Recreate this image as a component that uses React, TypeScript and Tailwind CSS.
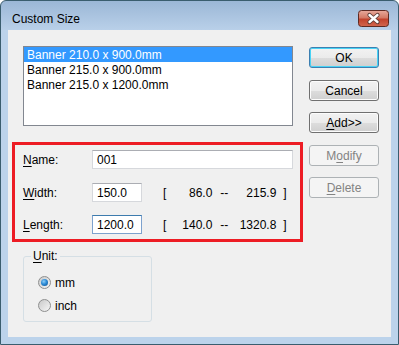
import type { ReactNode } from 'react';

type BtnKind = 'default' | 'normal' | 'disabled';

const Btn = ({ kind, children }: { kind: BtnKind; children: ReactNode }) => {
  if (kind === 'default') {
    return (
      <div className="flex h-[21px] w-[70px] items-center justify-center rounded-[3px] border border-[#3c7fb1] bg-[linear-gradient(to_bottom,#f2f2f2_0%,#ebebeb_50%,#dddddd_51%,#cfcfcf_100%)] shadow-[inset_0_0_0_1px_#48d3f5] text-black">
        {children}
      </div>
    );
  }
  if (kind === 'disabled') {
    return (
      <div className="flex h-[21px] w-[70px] items-center justify-center rounded-[3px] border border-[#adb2b5] bg-[#f4f4f4] text-[#838383]">
        {children}
      </div>
    );
  }
  return (
    <div className="flex h-[21px] w-[70px] items-center justify-center rounded-[3px] border border-[#707070] bg-[linear-gradient(to_bottom,#f2f2f2_0%,#ebebeb_50%,#dddddd_51%,#cfcfcf_100%)] shadow-[inset_0_0_0_1px_#fcfcfc] text-black">
      {children}
    </div>
  );
};

const Radio = ({ checked }: { checked: boolean }) => (
  <div className="flex h-[13px] w-[13px] items-center justify-center rounded-full border border-[#8e8f8f] bg-[linear-gradient(to_bottom_right,#c9c9c9,#f6f6f6)]">
    {checked && (
      <div className="h-[7px] w-[7px] rounded-full bg-[radial-gradient(circle_at_40%_35%,#8fd0f7_0%,#2c8ad6_45%,#0d4f8b_100%)]" />
    )}
  </div>
);

const CloseBtn = () => (
  <svg width="31" height="17" viewBox="0 0 31 17" className="mt-[9px]">
    <defs>
      <linearGradient id="cg" x1="0" y1="0" x2="0" y2="1">
        <stop offset="0" stopColor="#e8aa9c" />
        <stop offset="0.45" stopColor="#d47a66" />
        <stop offset="0.55" stopColor="#c2432d" />
        <stop offset="1" stopColor="#d2674f" />
      </linearGradient>
    </defs>
    <rect x="0.5" y="0.5" width="30" height="16" rx="3" fill="url(#cg)" stroke="#5e2a22" />
    <path d="M11.5 5 L19.5 12 M19.5 5 L11.5 12" stroke="#5b3b36" strokeWidth="4.2" strokeLinecap="round" />
    <path d="M11.5 5 L19.5 12 M19.5 5 L11.5 12" stroke="#ffffff" strokeWidth="2.4" strokeLinecap="round" />
  </svg>
);

const Field = ({ label, value, focused }: { label: ReactNode; value: string; focused?: boolean }) => (
  <>
    <div className="w-[69px]">{label}</div>
    <div
      className={
        focused
          ? 'flex h-[19px] w-[50px] items-center border border-[#7da2ce] border-t-[#3d7bad] bg-white pl-[4px]'
          : 'flex h-[19px] w-[50px] items-center border border-[#d6d8dc] border-t-[#abadb3] bg-white pl-[4px]'
      }
    >
      {value}
    </div>
  </>
);

const Range = ({ min, max }: { min: string; max: string }) => (
  <div className="flex items-center">
    <span className="ml-[21px]">[</span>
    <span className="w-[46px] text-right">{min}</span>
    <span className="ml-[8px]">--</span>
    <span className="w-[48px] text-right">{max}</span>
    <span className="ml-[7px]">]</span>
  </div>
);

export default function App() {
  const sizes = ['Banner 210.0 x 900.0mm', 'Banner 215.0 x 900.0mm', 'Banner 215.0 x 1200.0mm'];

  return (
    <div className="h-[345px] w-[399px] bg-white font-['Liberation_Sans',Arial,sans-serif] text-[12px] leading-none text-black">
      <div className="flex h-full w-full flex-col rounded-t-[6px] border border-[#3a5d6e] bg-[linear-gradient(to_bottom,#9bb7d6_0px,#b9d0e9_29px,#bcd3eb_29px)]">
        {/* title bar */}
        <div className="flex h-[29px] items-start justify-between pl-[11px] pr-[9px]">
          <span className="pt-[12px]">Custom Size</span>
          <CloseBtn />
        </div>

        {/* client area */}
        <div className="mx-[7px] mb-[7px] flex flex-1 bg-[#f0f0f0] pl-[4px]">
          <div className="flex w-[291px] flex-col">
            <div className="ml-[11px] mt-[16px] h-[80px] w-[270px] border border-[#828790] bg-white">
              {sizes.map((s, i) => (
                <div
                  key={s}
                  className={i === 0 ? 'flex h-[15px] items-center bg-[#3399ff] pl-[3px] text-white' : 'flex h-[15px] items-center pl-[3px]'}
                >
                  {s}
                </div>
              ))}
            </div>

            <div className="mt-[16px] flex h-[100px] flex-col border-[3px] border-[#ed1c24] pb-[5px] pl-[8px] pr-[7px] pt-[5px]">
              <div className="flex h-[19px] items-center">
                <div className="w-[69px]">
                  <span className="underline underline-offset-[2px]">N</span>ame:
                </div>
                <div className="flex h-[19px] flex-1 items-center border border-[#d6d8dc] border-t-[#abadb3] bg-white pl-[4px]">001</div>
              </div>
              <div className="mt-[14px] flex h-[19px] items-center">
                <Field
                  label={
                    <>
                      <span className="underline underline-offset-[2px]">W</span>idth:
                    </>
                  }
                  value="150.0"
                />
                <Range min="86.0" max="215.9" />
              </div>
              <div className="mt-[13px] flex h-[19px] items-center">
                <Field
                  label={
                    <>
                      <span className="underline underline-offset-[2px]">L</span>ength:
                    </>
                  }
                  value="1200.0"
                  focused
                />
                <Range min="140.0" max="1320.8" />
              </div>
            </div>

            <fieldset className="ml-[11px] mt-[7px] w-[129px] rounded-[3px] border border-[#d5dfe5] pb-[8px] pl-[7px] pt-[12px]">
              <legend className="px-[2px] leading-[14px]">
                <span className="underline underline-offset-[2px]">U</span>nit:
              </legend>
              <div className="flex flex-col gap-[8px] pl-[7px]">
                <div className="flex h-[15px] items-center gap-[4px]">
                  <Radio checked />
                  <span>mm</span>
                </div>
                <div className="flex h-[15px] items-center gap-[4px]">
                  <Radio checked={false} />
                  <span>inch</span>
                </div>
              </div>
            </fieldset>
          </div>

          <div className="ml-[6px] flex flex-col pt-[17px]">
            <Btn kind="default">OK</Btn>
            <div className="mt-[12px]">
              <Btn kind="normal">Cancel</Btn>
            </div>
            <div className="mt-[11px]">
              <Btn kind="normal">
                <span className="underline underline-offset-[2px]">A</span>dd&gt;&gt;
              </Btn>
            </div>
            <div className="mt-[12px]">
              <Btn kind="disabled">
                M<span className="underline underline-offset-[2px]">o</span>dify
              </Btn>
            </div>
            <div className="mt-[11px]">
              <Btn kind="disabled">
                <span className="underline underline-offset-[2px]">D</span>elete
              </Btn>
            </div>
          </div>
        </div>
      </div>
    </div>
  );
}
